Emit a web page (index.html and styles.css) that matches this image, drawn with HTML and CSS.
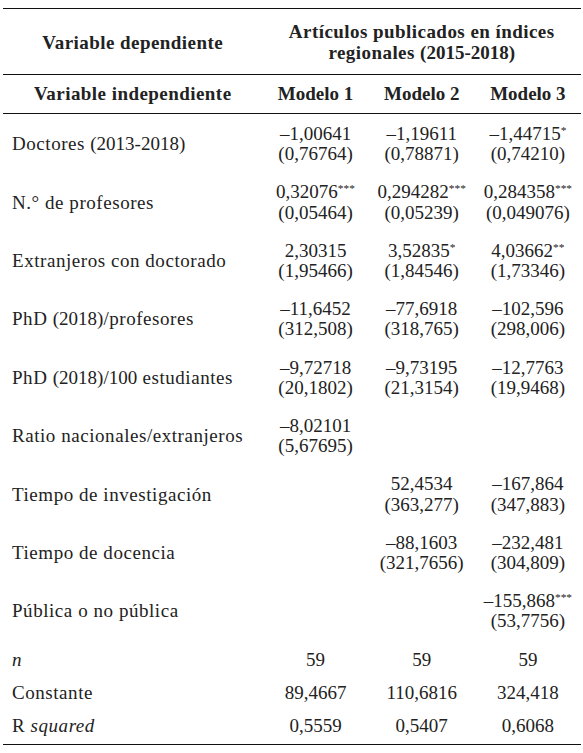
FILE: index.html
```html
<!DOCTYPE html>
<html lang="es">
<head>
	<meta charset="UTF-8">
	<meta name="viewport" content="width=device-width, initial-scale=1.0">
	<title>Artículos publicados en índices regionales</title>
	<link rel="stylesheet" href="styles.css">
</head>
<body>
	<table class="results">
		<colgroup>
			<col class="col-label">
			<col class="col-model">
			<col class="col-model">
			<col class="col-model">
		</colgroup>
		<thead>
			<tr class="dep">
				<th>Variable dependiente</th>
				<th colspan="3">Artículos publicados en índices<br>regionales <span class="num">(2015-2018)</span></th>
			</tr>
			<tr class="ind">
				<th>Variable independiente</th>
				<th>Modelo 1</th>
				<th>Modelo 2</th>
				<th>Modelo 3</th>
			</tr>
		</thead>
		<tbody>
			<tr class="coef">
				<td>Doctores <span class="num">(2013-2018)</span></td>
				<td>–1,00641<br>(0,76764)</td>
				<td>–1,19611<br>(0,78871)</td>
				<td>–1,44715<sup>*</sup><br>(0,74210)</td>
			</tr>
			<tr class="coef">
				<td>N.° de profesores</td>
				<td>0,32076<sup>***</sup><br>(0,05464)</td>
				<td>0,294282<sup>***</sup><br>(0,05239)</td>
				<td>0,284358<sup>***</sup><br>(0,049076)</td>
			</tr>
			<tr class="coef">
				<td>Extranjeros con doctorado</td>
				<td>2,30315<br>(1,95466)</td>
				<td>3,52835<sup>*</sup><br>(1,84546)</td>
				<td>4,03662<sup>**</sup><br>(1,73346)</td>
			</tr>
			<tr class="coef">
				<td>PhD <span class="num">(2018)</span>/profesores</td>
				<td>–11,6452<br>(312,508)</td>
				<td>–77,6918<br>(318,765)</td>
				<td>–102,596<br>(298,006)</td>
			</tr>
			<tr class="coef">
				<td>PhD <span class="num">(2018)/100</span> estudiantes</td>
				<td>–9,72718<br>(20,1802)</td>
				<td>–9,73195<br>(21,3154)</td>
				<td>–12,7763<br>(19,9468)</td>
			</tr>
			<tr class="coef">
				<td>Ratio nacionales/extranjeros</td>
				<td>–8,02101<br>(5,67695)</td>
				<td></td>
				<td></td>
			</tr>
			<tr class="coef">
				<td>Tiempo de investigación</td>
				<td></td>
				<td>52,4534<br>(363,277)</td>
				<td>–167,864<br>(347,883)</td>
			</tr>
			<tr class="coef">
				<td>Tiempo de docencia</td>
				<td></td>
				<td>–88,1603<br>(321,7656)</td>
				<td>–232,481<br>(304,809)</td>
			</tr>
			<tr class="coef">
				<td>Pública o no pública</td>
				<td></td>
				<td></td>
				<td>–155,868<sup>***</sup><br>(53,7756)</td>
			</tr>
			<tr class="stat">
				<td><i>n</i></td>
				<td>59</td>
				<td>59</td>
				<td>59</td>
			</tr>
			<tr class="stat">
				<td>Constante</td>
				<td>89,4667</td>
				<td>110,6816</td>
				<td>324,418</td>
			</tr>
			<tr class="stat">
				<td>R <i>squared</i></td>
				<td>0,5559</td>
				<td>0,5407</td>
				<td>0,6068</td>
			</tr>
		</tbody>
	</table>
</body>
</html>
```

FILE: styles.css
```css
body {
	margin: 0;
	background-color: #fff;
	font-family: "Liberation Serif", "Times New Roman", serif;
	font-size: 19px;
	color: #222;
}

.results {
	width: 578px;
	margin: 8px 0 0 3px;
	border-collapse: collapse;
	table-layout: fixed;
	border-top: 1px solid #111;
	border-bottom: 1px solid #111;
}

.col-label {
	width: 259px;
}

.col-model {
	width: 106px;
}

.results th {
	font-weight: bold;
	text-align: center;
	vertical-align: middle;
	padding: 0;
}

.dep th,
.ind th:first-child {
	letter-spacing: 0.45px;
}

.dep th {
	line-height: 21px;
	padding: 12px 0 11px;
}

.ind th {
	line-height: 20px;
	padding: 9px 0;
	border-top: 1px solid #111;
	border-bottom: 1px solid #111;
}

.results td {
	text-align: center;
	vertical-align: middle;
	padding: 0;
	white-space: nowrap;
}

.results td:first-child {
	text-align: left;
	padding-left: 9px;
	letter-spacing: 0.55px;
}

.results .num {
	letter-spacing: 0;
}

.coef td {
	line-height: 20.2px;
	padding-top: 9px;
	padding-bottom: 9px;
}

tbody .coef:first-child td {
	padding-top: 10px;
}

.stat td {
	line-height: 20px;
	padding-top: 6.5px;
	padding-bottom: 6.5px;
}

.coef + .stat td {
	padding-top: 9px;
}

.stat:last-child td {
	padding-bottom: 8.5px;
}

sup {
	font-size: 0.6em;
	line-height: 0;
	vertical-align: 0.55em;
}
```
